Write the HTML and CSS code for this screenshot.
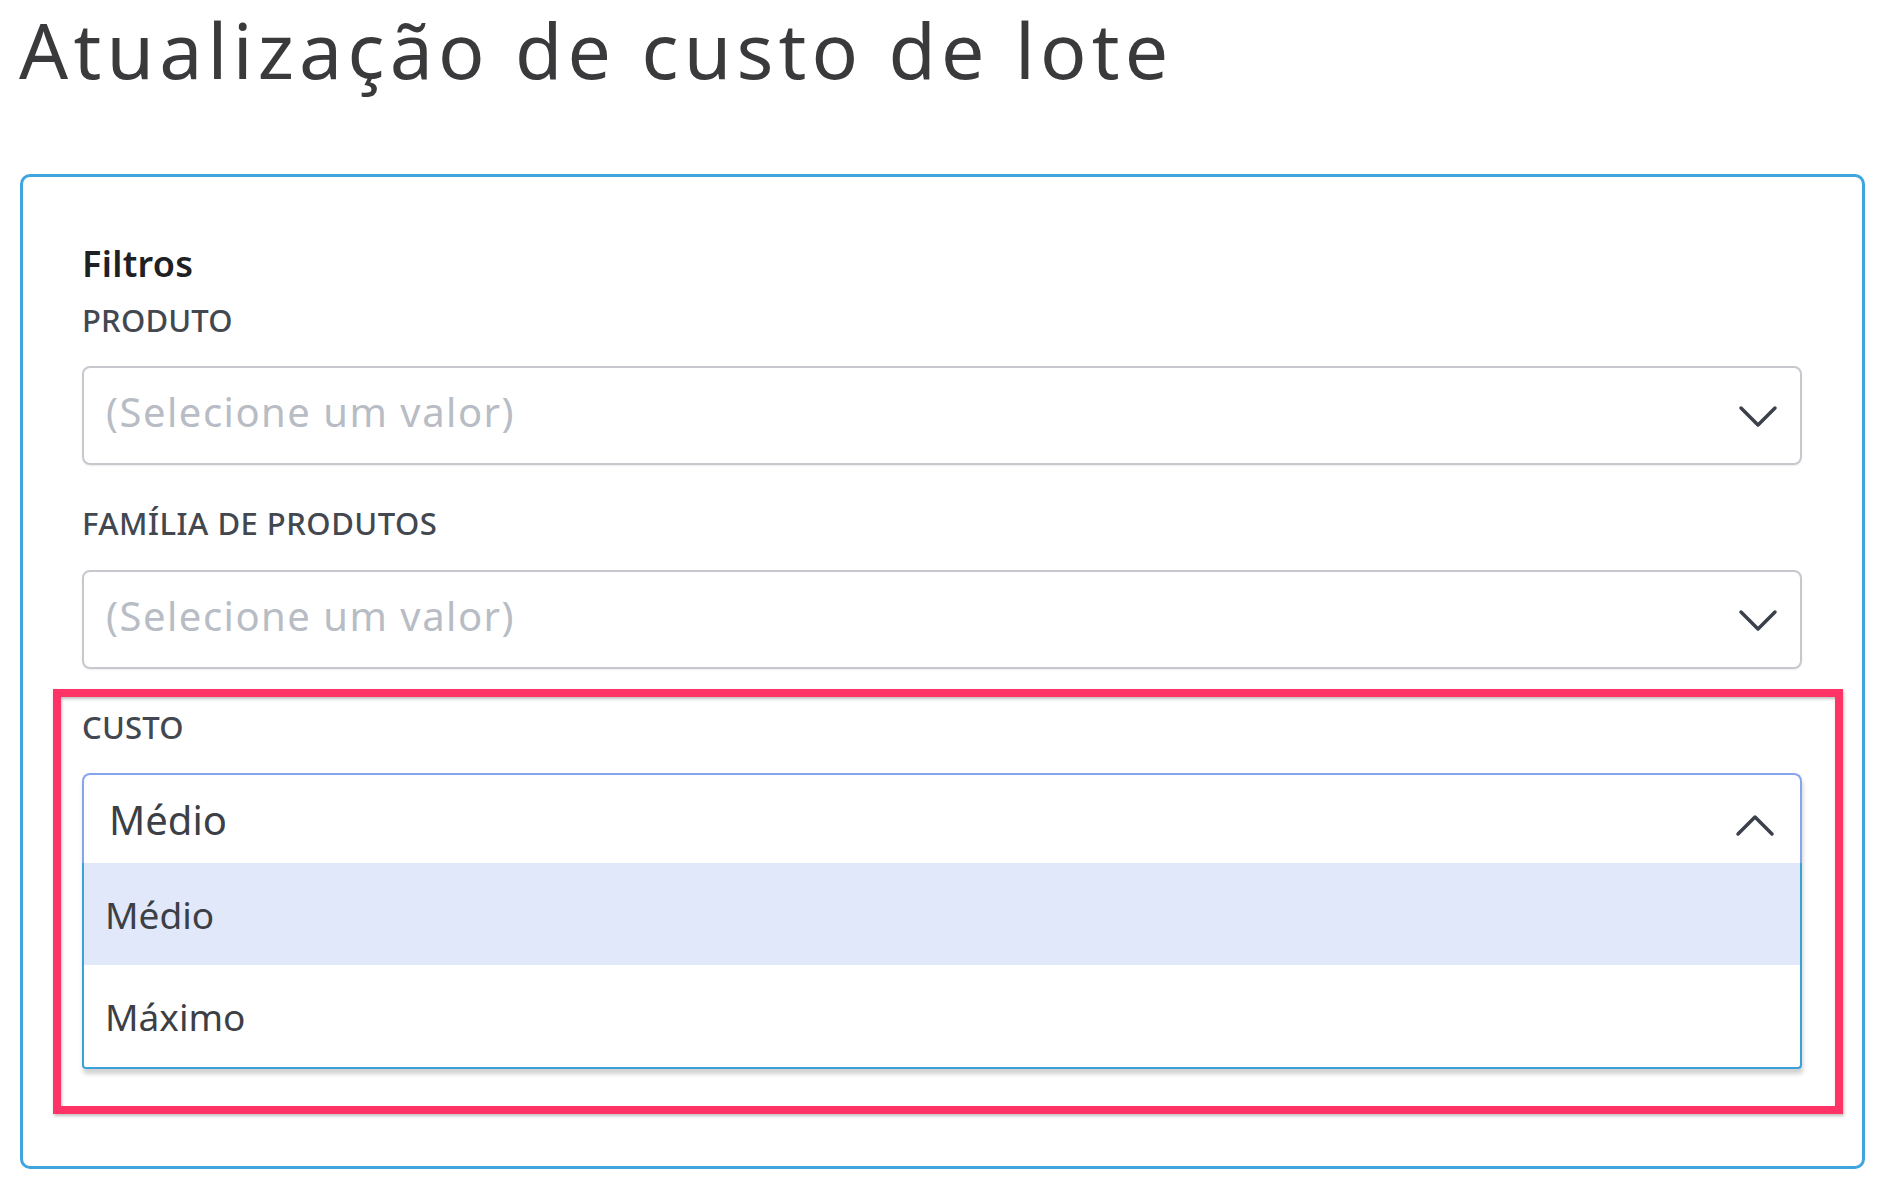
FILE: index.html
```html
<!DOCTYPE html>
<html lang="pt-BR">
<head>
<meta charset="utf-8">
<title>Atualização de custo de lote</title>
<link rel="stylesheet" href="styles.css">
</head>
<body>
<h1 class="page-title">Atualização de custo de lote</h1>
<section class="card">
  <h2 class="section-title">Filtros</h2>

  <div class="field">
    <label class="field-label">PRODUTO</label>
    <div class="select">
      <span class="placeholder">(Selecione um valor)</span>
      <svg class="chevron" viewBox="0 0 40 24" width="40" height="24"><path d="M3 3 L20 20 L37 3"/></svg>
    </div>
  </div>

  <div class="field field-gap">
    <label class="field-label">FAMÍLIA DE PRODUTOS</label>
    <div class="select">
      <span class="placeholder">(Selecione um valor)</span>
      <svg class="chevron" viewBox="0 0 40 24" width="40" height="24"><path d="M3 3 L20 20 L37 3"/></svg>
    </div>
  </div>

  <div class="highlight">
    <label class="field-label">CUSTO</label>
    <div class="combo">
      <div class="combo-head">
        <span class="value">Médio</span>
        <svg class="chevron up" viewBox="0 0 40 24" width="40" height="24"><path d="M3 21 L20 4 L37 21"/></svg>
      </div>
      <ul class="combo-list">
        <li class="option active">Médio</li>
        <li class="option">Máximo</li>
      </ul>
    </div>
  </div>
</section>
</body>
</html>
```

FILE: styles.css
```css
html, body {
  margin: 0;
  padding: 0;
  background: #ffffff;
}

body {
  font-family: "Noto Sans", "Open Sans", sans-serif;
  color: #3c3f45;
  padding-top: 4px;
}

.page-title {
  margin: 0 0 0 19px;
  font-size: 77px;
  line-height: 92px;
  font-weight: 400;
  letter-spacing: 5.2px;
  color: #3a3a3c;
}

.card {
  margin: 78px 30px 0 20px;
  border: 3px solid #3ea6dd;
  border-radius: 10px;
  padding: 67px 60px 52px 59px;
  background: #fff;
}

.section-title {
  margin: 0;
  font-size: 36px;
  line-height: 40px;
  font-weight: 600;
  color: #1f2023;
  letter-spacing: 0.3px;
}

.field-label {
  display: block;
  margin-top: 16px;
  font-size: 31px;
  line-height: 40px;
  font-weight: 500;
  letter-spacing: 0.2px;
  color: #43474f;
}

.field-gap .field-label {
  margin-top: 38px;
  letter-spacing: 0.5px;
}

.select {
  margin-top: 26px;
  height: 99px;
  box-sizing: border-box;
  border: 2px solid #c6c8ce;
  border-radius: 8px;
  display: flex;
  align-items: center;
  justify-content: space-between;
  padding: 0 22px 8px 22px;
  box-shadow: 0 1px 2px rgba(0, 0, 0, 0.08);
}

.field-gap .select {
  margin-top: 27px;
}

.placeholder {
  font-size: 40px;
  letter-spacing: 1.5px;
  color: #b8bcc4;
}

.chevron {
  flex: none;
  fill: none;
  stroke: #3b404a;
  stroke-width: 3.5;
  stroke-linecap: round;
  stroke-linejoin: round;
  margin-top: 10px;
}

.chevron.up {
  margin-top: 12px;
  margin-right: 3px;
}

.highlight {
  margin: 20px -41px 0 -29px;
  border: 8px solid #ff3366;
  padding: 10px 33px 37px 21px;
  box-shadow: 1px 2px 3px rgba(0, 0, 0, 0.25), inset 1px 2px 3px rgba(0, 0, 0, 0.25);
}

.highlight .field-label {
  margin-top: 0;
}

.combo {
  margin-top: 26px;
  box-shadow: 1px 5px 4px rgba(0, 0, 0, 0.18);
  border-radius: 8px 8px 4px 4px;
}

.combo-head {
  height: 90px;
  box-sizing: border-box;
  border: 2px solid #87a5ec;
  border-bottom: none;
  border-radius: 8px 8px 0 0;
  display: flex;
  align-items: center;
  justify-content: space-between;
  padding: 0 22px 0 25px;
}

.value {
  font-size: 40px;
  color: #3c3f45;
}

.combo-list {
  list-style: none;
  margin: 0;
  padding: 0;
  border: 2px solid #3aa1d9;
  border-top: none;
  border-radius: 0 0 4px 4px;
}

.option {
  height: 102px;
  display: flex;
  align-items: center;
  padding-left: 21px;
  font-size: 37px;
  color: #3c3f45;
}

.option.active {
  background: #e0e8fa;
}
```
